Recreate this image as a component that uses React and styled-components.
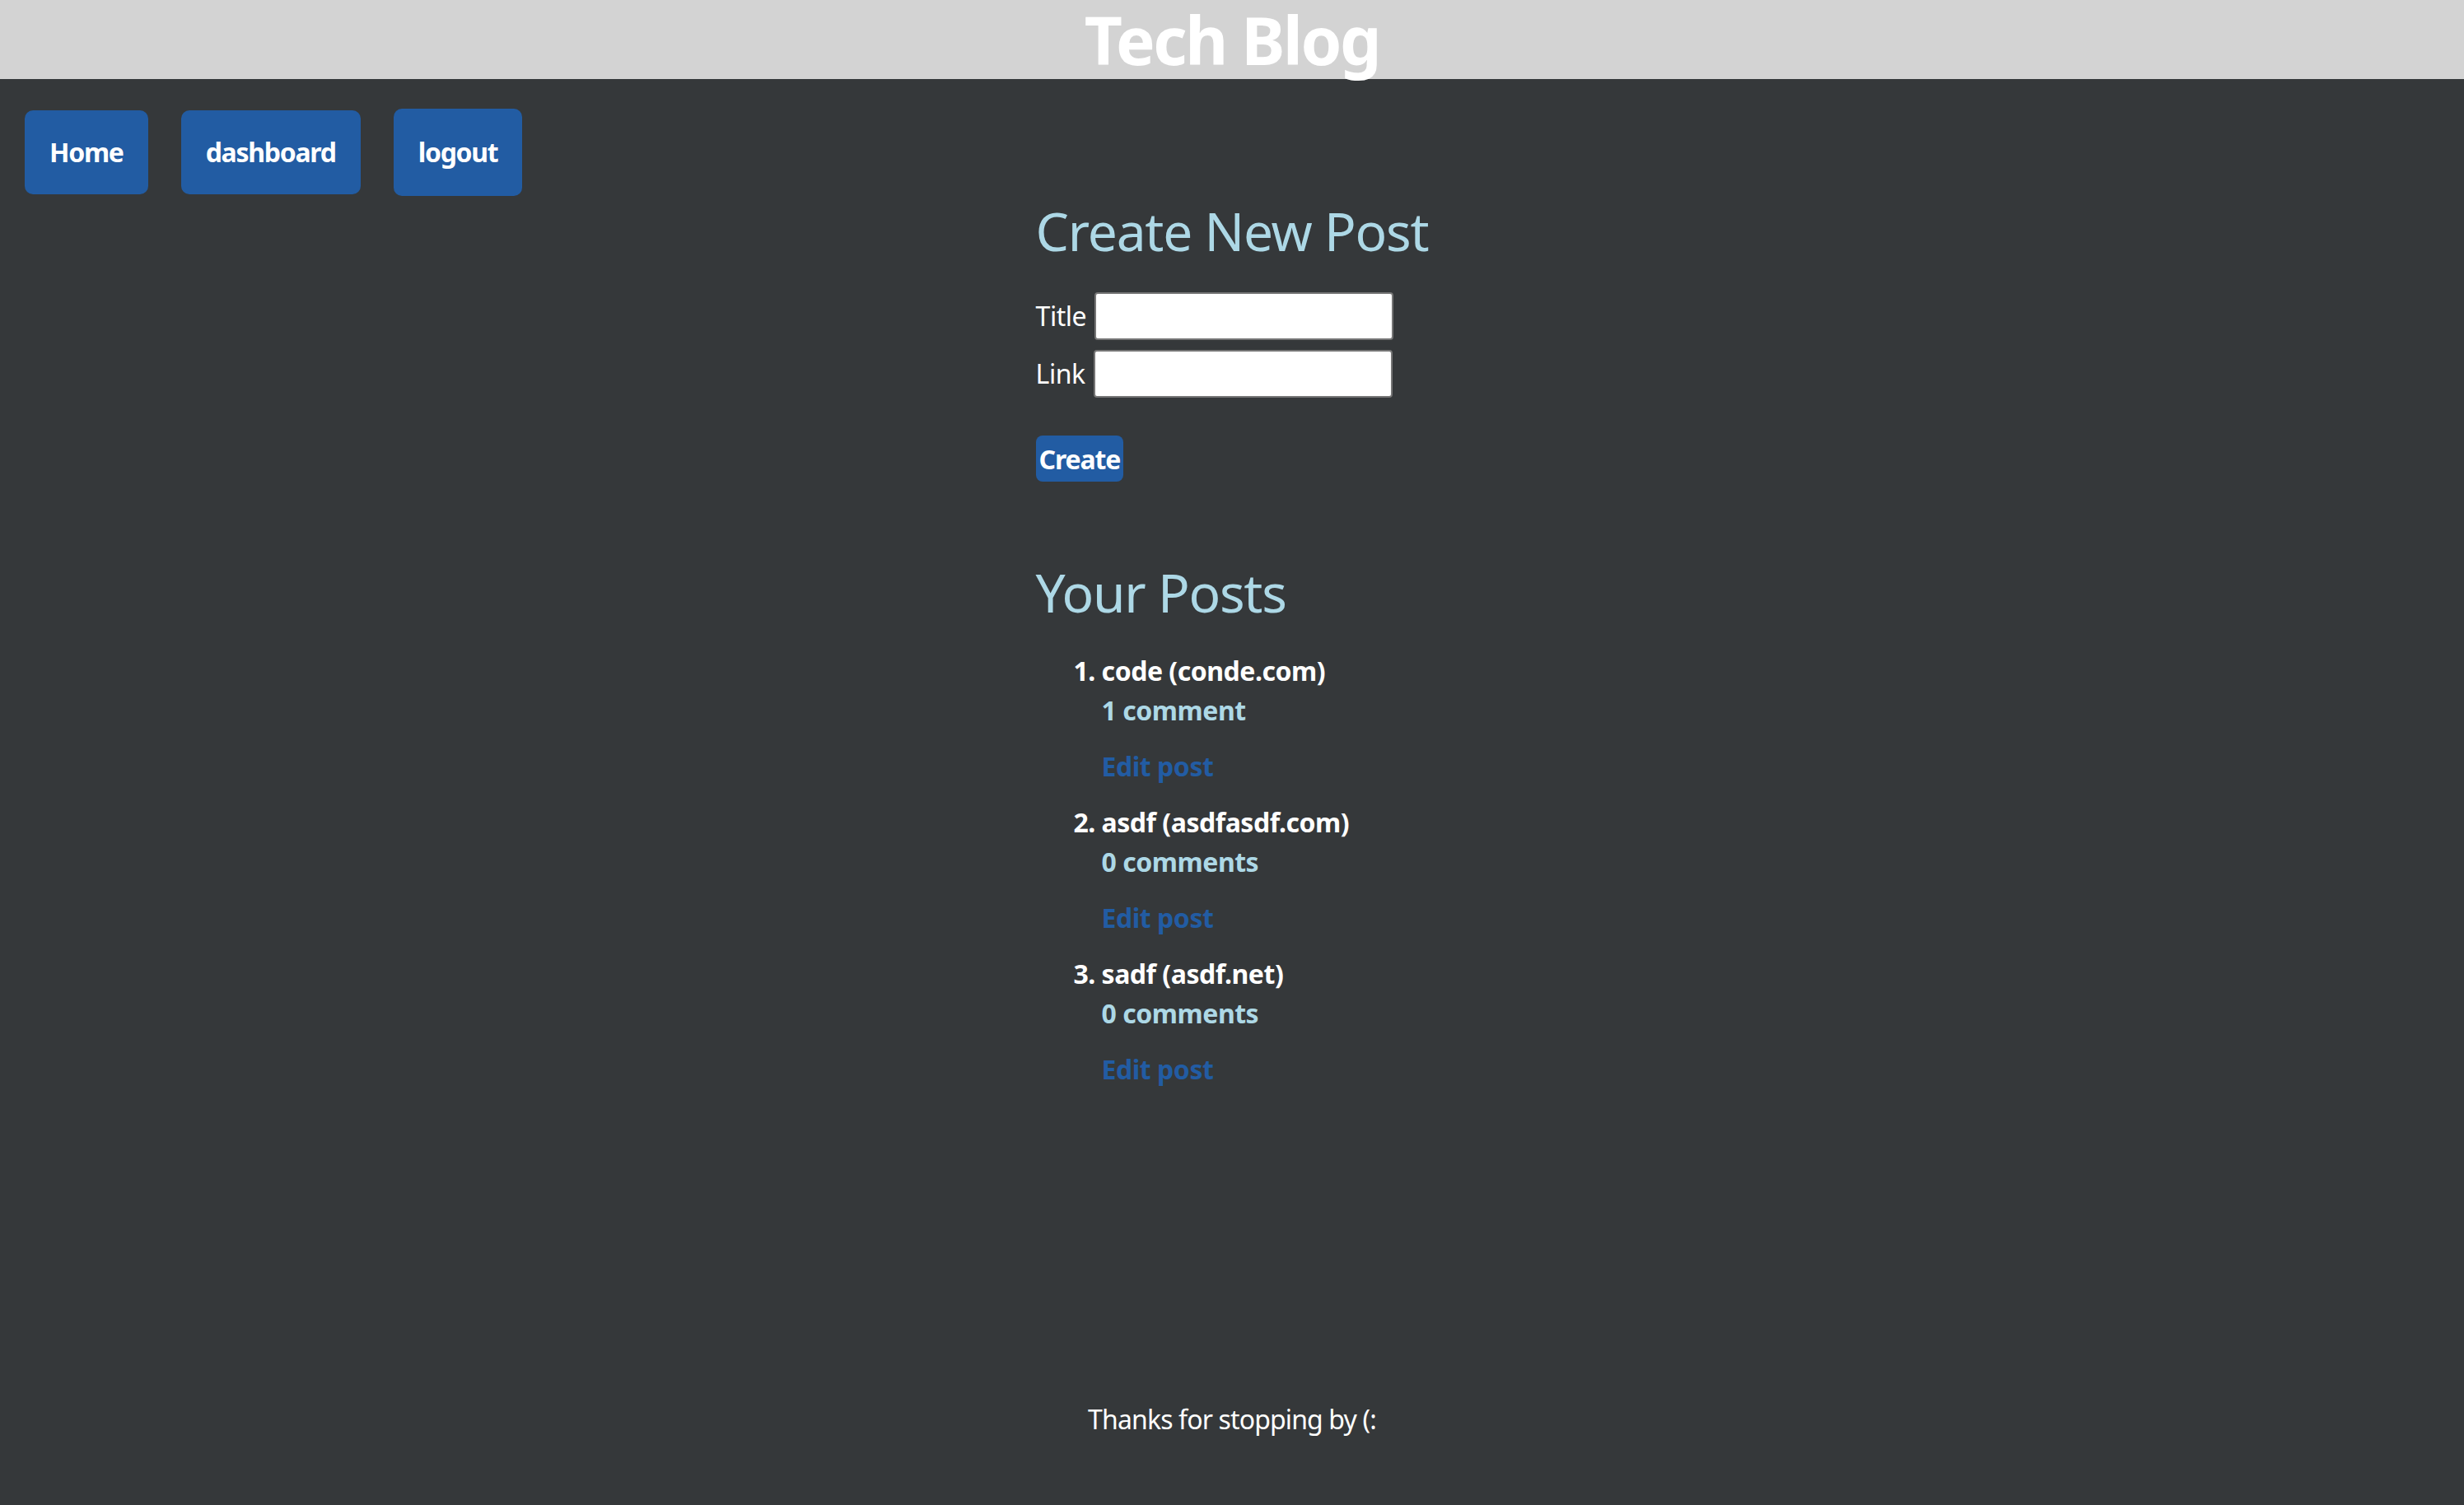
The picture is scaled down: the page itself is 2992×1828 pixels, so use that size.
import React from 'react'
import styled, { createGlobalStyle } from 'styled-components'

const GlobalStyle = createGlobalStyle`
	html, body {
		margin: 0;
		padding: 0;
		background: #35383a;
		font-family: 'Noto Sans', 'Open Sans', sans-serif;
		color: #fff;
	}
`

const Page = styled.div`
	min-height: 100vh;
	display: flex;
	flex-direction: column;
`
const Header = styled.header`
	height: 96px;
	background-color: #d3d3d3;
	display: flex;
	justify-content: center;
`
const Title = styled.h1`
	margin: 0;
	font-size: 80px;
	line-height: 96px;
	font-weight: 700;
	letter-spacing: -0.03em;
	color: #fff;
`
const Nav = styled.nav`
	display: flex;
	align-items: center;
	gap: 40px;
	padding: 36px 0 0 30px;
`
const NavButton = styled.a`
	display: block;
	padding: ${(props) => (props.tall ? '32px 30px' : '30px 30px')};
	background-color: #225ca3;
	color: #fff;
	font-size: 32px;
	font-weight: 700;
	line-height: 42px;
	letter-spacing: -0.04em;
	border-radius: 10px;
	text-decoration: none;
`
const Main = styled.main`
	flex: 1;
	display: flex;
	justify-content: center;
`
const Section = styled.section`
	display: flex;
	flex-direction: column;
	align-items: flex-start;
	padding-top: 4px;
`
const Heading = styled.h2`
	margin: ${(props) => props.gap || '0'} 0 0;
	font-size: 64px;
	font-weight: 400;
	line-height: 77px;
	letter-spacing: -0.019em;
	color: #add8e6;
`
const Form = styled.form`
	display: flex;
	flex-direction: column;
	gap: 12px;
	margin-top: 36px;
`
const Row = styled.div`
	display: flex;
	align-items: center;
	gap: 10px;
	font-size: 32px;
	line-height: 44px;
	letter-spacing: -0.015em;
`
const Input = styled.input`
	width: 363px;
	height: 58px;
	box-sizing: border-box;
	border: 2px solid #767676;
	border-radius: 4px;
	background: #fff;
`
const CreateButton = styled.button`
	align-self: flex-start;
	margin-top: 46px;
	height: 56px;
	padding: 0 4px;
	border: none;
	border-radius: 8px;
	background-color: #225ca3;
	color: #fff;
	font-family: inherit;
	font-size: 32px;
	font-weight: 700;
	letter-spacing: -0.035em;
`
const List = styled.ol`
	margin: 35px 0 0;
	padding-left: 80px;
	font-size: 32px;
	font-weight: 700;
	line-height: 44px;
	letter-spacing: -0.015em;
`
const Item = styled.li`
	margin-bottom: 24px;
`
const PostTitle = styled.div`
	color: #fff;
`
const Comments = styled.a`
	display: block;
	margin-top: 4px;
	color: #add8e6;
	text-decoration: none;
`
const EditLink = styled.a`
	display: block;
	margin-top: 24px;
	color: #225ca3;
	text-decoration: none;
`
const Footer = styled.footer`
	text-align: center;
	font-size: 32px;
	line-height: 44px;
	letter-spacing: -0.027em;
	padding-bottom: 82px;
`

const posts = [
	{ title: 'code', link: 'conde.com', comments: 1 },
	{ title: 'asdf', link: 'asdfasdf.com', comments: 0 },
	{ title: 'sadf', link: 'asdf.net', comments: 0 },
]

const App = () => {
	return (
		<Page>
			<GlobalStyle />
			<Header>
				<Title>Tech Blog</Title>
			</Header>
			<Nav>
				<NavButton href='#'>Home</NavButton>
				<NavButton href='#'>dashboard</NavButton>
				<NavButton href='#' tall>
					logout
				</NavButton>
			</Nav>
			<Main>
				<Section>
					<Heading>Create New Post</Heading>
					<Form onSubmit={(e) => e.preventDefault()}>
						<Row>
							<label>Title</label>
							<Input type='text' />
						</Row>
						<Row>
							<label>Link</label>
							<Input type='text' />
						</Row>
					</Form>
					<CreateButton>Create</CreateButton>
					<Heading gap='96px'>Your Posts</Heading>
					<List>
						{posts.map((post) => (
							<Item key={post.title}>
								<PostTitle>
									{post.title} ({post.link})
								</PostTitle>
								<Comments href='#'>
									{post.comments}{' '}
									{post.comments === 1 ? 'comment' : 'comments'}
								</Comments>
								<EditLink href='#'>Edit post</EditLink>
							</Item>
						))}
					</List>
				</Section>
			</Main>
			<Footer>Thanks for stopping by (:</Footer>
		</Page>
	)
}

export default App
